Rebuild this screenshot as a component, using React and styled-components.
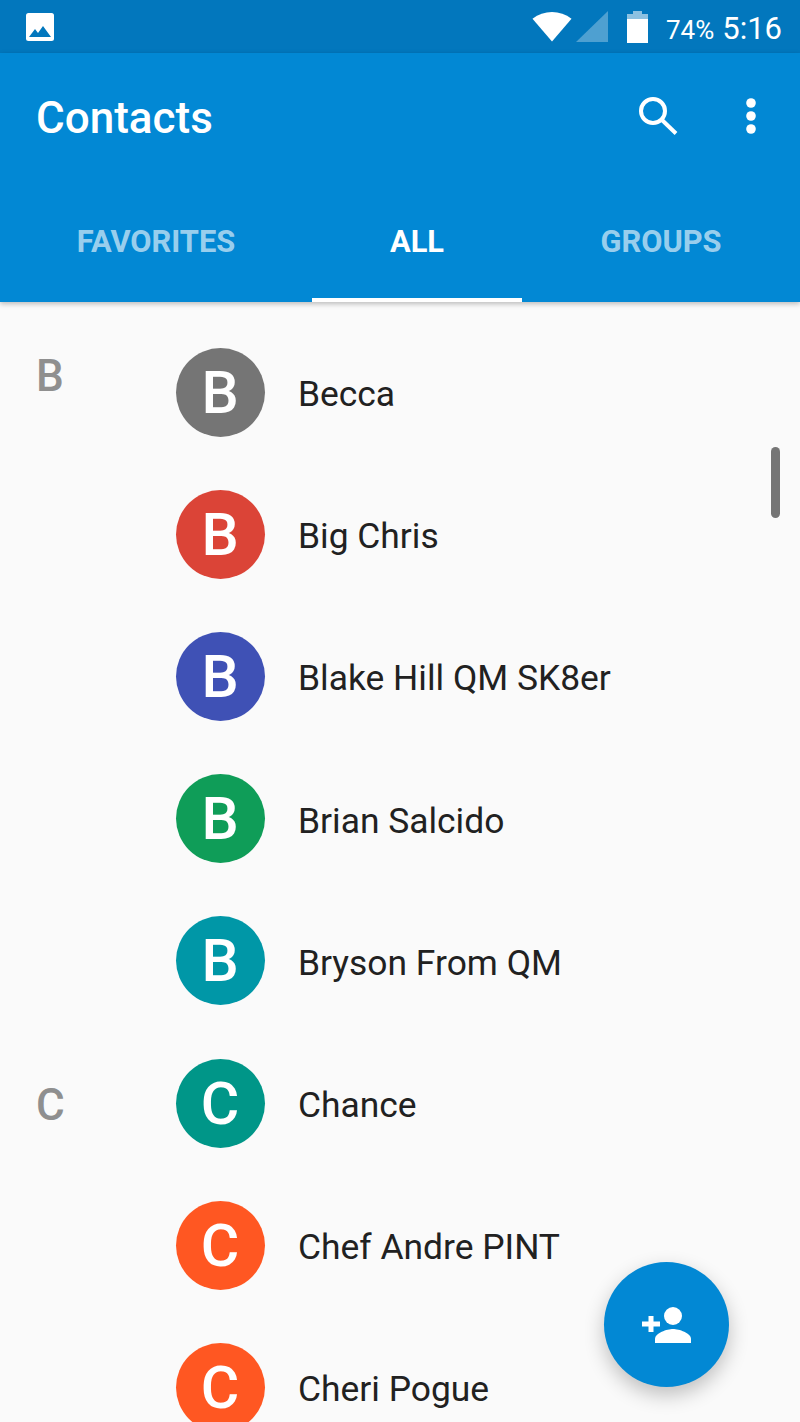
import React from "react";
import styled, { createGlobalStyle } from "styled-components";

const GlobalStyle = createGlobalStyle`
  html, body {
    margin: 0;
    padding: 0;
    background: #fafafa;
    font-family: Roboto, "Liberation Sans", sans-serif;
  }
`;

const Screen = styled.div`
  position: relative;
  width: 800px;
  height: 1422px;
  overflow: hidden;
  background: #fafafa;
`;

const StatusBar = styled.div`
  height: 53px;
  background: #0277bd;
  display: flex;
  align-items: center;
  justify-content: space-between;
  padding: 0 18px 0 26px;
  color: #fff;
`;

const StatusRight = styled.div`
  display: flex;
  align-items: center;
`;

const StatusIcon = styled.svg`
  margin-left: ${(p) => p.$gap || 0}px;
`;

const StatusText = styled.span`
  font-size: 31px;
  margin: 3px 0 0 18px;
  white-space: nowrap;
`;

const Percent = styled.span`
  font-size: 26px;
  margin-right: 8px;
`;

const Header = styled.header`
  background: #0288d4;
  height: 249px;
  box-shadow: 0 2px 5px rgba(0, 0, 0, 0.25);
  position: relative;
  z-index: 1;
`;

const Toolbar = styled.div`
  height: 128px;
  display: flex;
  align-items: center;
  justify-content: space-between;
  padding: 0 43px 0 36px;
`;

const Title = styled.h1`
  margin: 2px 0 0;
  font-size: 44px;
  font-weight: 500;
  color: #fff;
`;

const Actions = styled.div`
  display: flex;
  align-items: center;
  gap: 67px;
  margin-bottom: 3px;
`;

const Tabs = styled.nav`
  display: flex;
  height: 121px;
`;

const Tab = styled.div`
  width: ${(p) => p.$width}px;
  height: 121px;
  box-sizing: border-box;
  display: flex;
  justify-content: center;
  padding-top: 42px;
  font-size: 30.8px;
  font-weight: 700;
  color: ${(p) => (p.$active ? "#fff" : "rgba(255,255,255,0.62)")};
  border-bottom: 4px solid ${(p) => (p.$active ? "#fff" : "transparent")};
`;

const List = styled.main`
  padding-top: 19px;
`;

const Row = styled.div`
  height: 142.2px;
  display: flex;
  align-items: center;
  position: relative;
`;

const SectionLetter = styled.span`
  width: 175.5px;
  padding-left: 36px;
  box-sizing: border-box;
  align-self: flex-start;
  padding-top: ${(p) => p.$top}px;
  font-size: 44px;
  font-weight: 500;
  line-height: 56px;
  color: #8f8f8f;
`;

const Avatar = styled.div`
  width: 89px;
  height: 89px;
  border-radius: 50%;
  background: ${(p) => p.$color};
  color: #fff;
  font-size: 59px;
  font-weight: 500;
  display: flex;
  align-items: center;
  justify-content: center;
  flex-shrink: 0;
`;

const Name = styled.span`
  margin: 4px 0 0 33.5px;
  font-size: 35.4px;
  color: #212121;
  white-space: nowrap;
`;

const ScrollThumb = styled.div`
  position: absolute;
  left: 771px;
  top: 447px;
  width: 9px;
  height: 71px;
  border-radius: 5px;
  background: #757575;
`;

const Fab = styled.button`
  position: absolute;
  left: 604px;
  top: 1262px;
  width: 125px;
  height: 125px;
  border: 0;
  padding: 0;
  border-radius: 50%;
  background: #0288d4;
  box-shadow: 0 8px 20px rgba(0, 0, 0, 0.24);
  display: flex;
  align-items: center;
  justify-content: center;
`;

const contacts = [
  { name: "Becca", color: "#757575", section: "B", top: 27 },
  { name: "Big Chris", color: "#db4437" },
  { name: "Blake Hill QM SK8er", color: "#3f51b5" },
  { name: "Brian Salcido", color: "#0f9d58" },
  { name: "Bryson From QM", color: "#0097a7" },
  { name: "Chance", color: "#009688", section: "C", top: 45 },
  { name: "Chef Andre PINT", color: "#ff5722" },
  { name: "Cheri Pogue", color: "#ff5722" },
];

const App = () => (
  <Screen>
    <GlobalStyle />
    <StatusBar>
      <svg width="28" height="28" viewBox="0 0 28 28">
        <rect width="28" height="28" rx="2.5" fill="#fff" />
        <path d="M3 24l6-8 3 4 5-7 8 11z" fill="#0277bd" />
      </svg>
      <StatusRight>
        <svg width="40" height="31" viewBox="0 0 41 31">
          <path d="M0.500 7.500C12 -1.500 29 -1.500 40.500 7.500L20.500 31z" fill="#fff" />
        </svg>
        <StatusIcon $gap={4} width="32" height="32" viewBox="0 0 32 32">
          <path d="M32 0v31H0z" fill="rgba(255,255,255,0.3)" />
        </StatusIcon>
        <StatusIcon $gap={19} width="21" height="32" viewBox="0 0 21 32">
          <path d="M6 0h9v3h6v9H0V3h6z" fill="rgba(255,255,255,0.55)" />
          <rect y="8" width="21" height="24" fill="#fff" />
        </StatusIcon>
        <StatusText>
          <Percent>74%</Percent>5:16
        </StatusText>
      </StatusRight>
    </StatusBar>

    <Header>
      <Toolbar>
        <Title>Contacts</Title>
        <Actions>
          <svg width="39" height="38" viewBox="0 0 39 38" fill="none" stroke="#fff" strokeWidth="4">
            <circle cx="14" cy="14" r="12" />
            <path d="M23 23L37 36.500" />
          </svg>
          <svg width="12" height="36" viewBox="0 0 12 36" fill="#fff">
            <circle cx="6" cy="5" r="4.800" />
            <circle cx="6" cy="18" r="4.800" />
            <circle cx="6" cy="31" r="4.800" />
          </svg>
        </Actions>
      </Toolbar>
      <Tabs>
        <Tab $width={312}>FAVORITES</Tab>
        <Tab $width={210} $active>ALL</Tab>
        <Tab $width={278}>GROUPS</Tab>
      </Tabs>
    </Header>

    <List>
      {contacts.map((c) => (
        <Row key={c.name}>
          <SectionLetter $top={c.top}>{c.section}</SectionLetter>
          <Avatar $color={c.color}>{c.name[0]}</Avatar>
          <Name>{c.name}</Name>
        </Row>
      ))}
    </List>

    <ScrollThumb />
    <Fab aria-label="Add contact">
      <svg width="50" height="36" viewBox="0 0 50 36" fill="#fff">
        <path d="M6.500 9h5v5.500H18v5h-6.500V25h-5v-5.500H0v-5h6.500z" />
        <circle cx="31" cy="9" r="9" />
        <path d="M13 36v-4c0-6 12-10 18-10s18 4 18 10v4z" />
      </svg>
    </Fab>
  </Screen>
);

export default App;
